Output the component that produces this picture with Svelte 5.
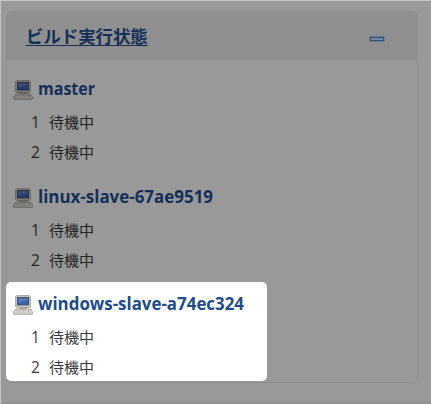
<script>
  const nodes = [
    { name: 'master', width: 57 },
    { name: 'linux-slave-67ae9519', width: 175 },
    { name: 'windows-slave-a74ec324', width: 206, active: true }
  ];
</script>

<main class="page">
  <section class="panel">
    <header>
      <a class="title" href="#builds">ビルド実行状態</a>
      <svg class="collapse" width="16" height="6" viewBox="0 0 16 6">
        <rect x="0" y="0" width="16" height="6" rx="1" fill="#6b7b90" />
        <rect x="1.5" y="1.5" width="13" height="3" fill="#7388a5" stroke="#304f7c" />
      </svg>
    </header>
    {#each nodes as node}
      <div class="node" class:active={node.active}>
        <div class="heading">
          <svg class="computer" width="20" height="20" viewBox="0 0 20 20">
            <path d="M3.5 .8h13l.7.8v9.8l-.7.8h-13l-.7-.8V1.600z" fill="#e1dfda" stroke="#8b8a87" />
            <rect x="4.500" y="2.500" width="11" height="7.500" fill="#3e62ac" stroke="#3f4b66" />
            <path d="M5 3h10v2L5 8z" fill="#6b87bd" opacity=".6" />
            <path d="M6.500 12.500h7v2h-7z" fill="#99968f" />
            <path d="M3 14h14l2.300 2.700v2.500H.700v-2.500z" fill="#dedbd4" stroke="#a3a09a" />
            <path d="M3.500 15.500h10M2.500 17h11" stroke="#bcb9b1" stroke-dasharray="1.500 .5" />
            <path d="M14.500 15.500h2M15 17h2" stroke="#aaa79f" />
          </svg>
          <svg class="name" width="220" height="24">
            <text x="0" y="19" textLength={node.width} lengthAdjust="spacingAndGlyphs">{node.name}</text>
          </svg>
        </div>
        <div class="executor"><span class="number">1</span><span>待機中</span></div>
        <div class="executor"><span class="number">2</span><span>待機中</span></div>
      </div>
    {/each}
  </section>
</main>

<style>
  .page {
    box-sizing: border-box;
    width: 431px;
    height: 404px;
    padding: 10px 12px 20px 5px;
    background: #999;
    border-top: 1px solid #c4c6c5;
    border-left: 1px solid #c4c6c5;
    border-bottom: 1px solid #919191;
    font-family: "Open Sans", "Noto Sans CJK JP", sans-serif;
    overflow: hidden;
  }
  .panel {
    box-sizing: border-box;
    width: 412px;
    height: 372px;
    border: 1px solid #8f8f8f;
    border-radius: 5px;
  }
  header {
    box-sizing: border-box;
    height: 48px;
    padding: 0 32px 1px 19px;
    display: flex;
    align-items: center;
    justify-content: space-between;
    background: #8f8f8f;
    border-radius: 4px 4px 0 0;
  }
  .title {
    color: #142f59;
    font: 700 17.400px/23px "Noto Sans CJK JP", sans-serif;
    text-decoration: underline;
    text-decoration-thickness: 1px;
    text-underline-offset: 2px;
  }
  .collapse {
    margin-top: 7px;
  }
  .node {
    box-sizing: border-box;
    height: 107.500px;
    padding-top: 16px;
    color: #242424;
  }
  .heading {
    height: 31px;
    padding-left: 6px;
    display: flex;
    align-items: flex-start;
  }
  .computer {
    flex: none;
    margin-top: 4px;
    filter: brightness(.62);
  }
  .name {
    margin-left: 5px;
    overflow: visible;
    fill: #142f59;
    font: 700 17.500px "Open Sans", sans-serif;
  }
  .executor {
    height: 30px;
    display: flex;
    align-items: center;
    font: 15.500px/30px "Open Sans", "Noto Sans CJK JP", sans-serif;
  }
  .executor span:last-child {
    font-family: "Noto Sans CJK JP", sans-serif;
    font-size: 15px;
  }
  .number {
    width: 18px;
    padding-left: 24px;
  }
  .active {
    width: 261px;
    height: 99px;
    margin-left: -1px;
    margin-top: 7px;
    padding-top: 9px;
    padding-left: 1px;
    background: #fff;
    border-radius: 5px;
    color: #3b3b3b;
  }
  .active .computer {
    filter: none;
  }
  .active .name {
    fill: #204b8c;
  }
</style>
